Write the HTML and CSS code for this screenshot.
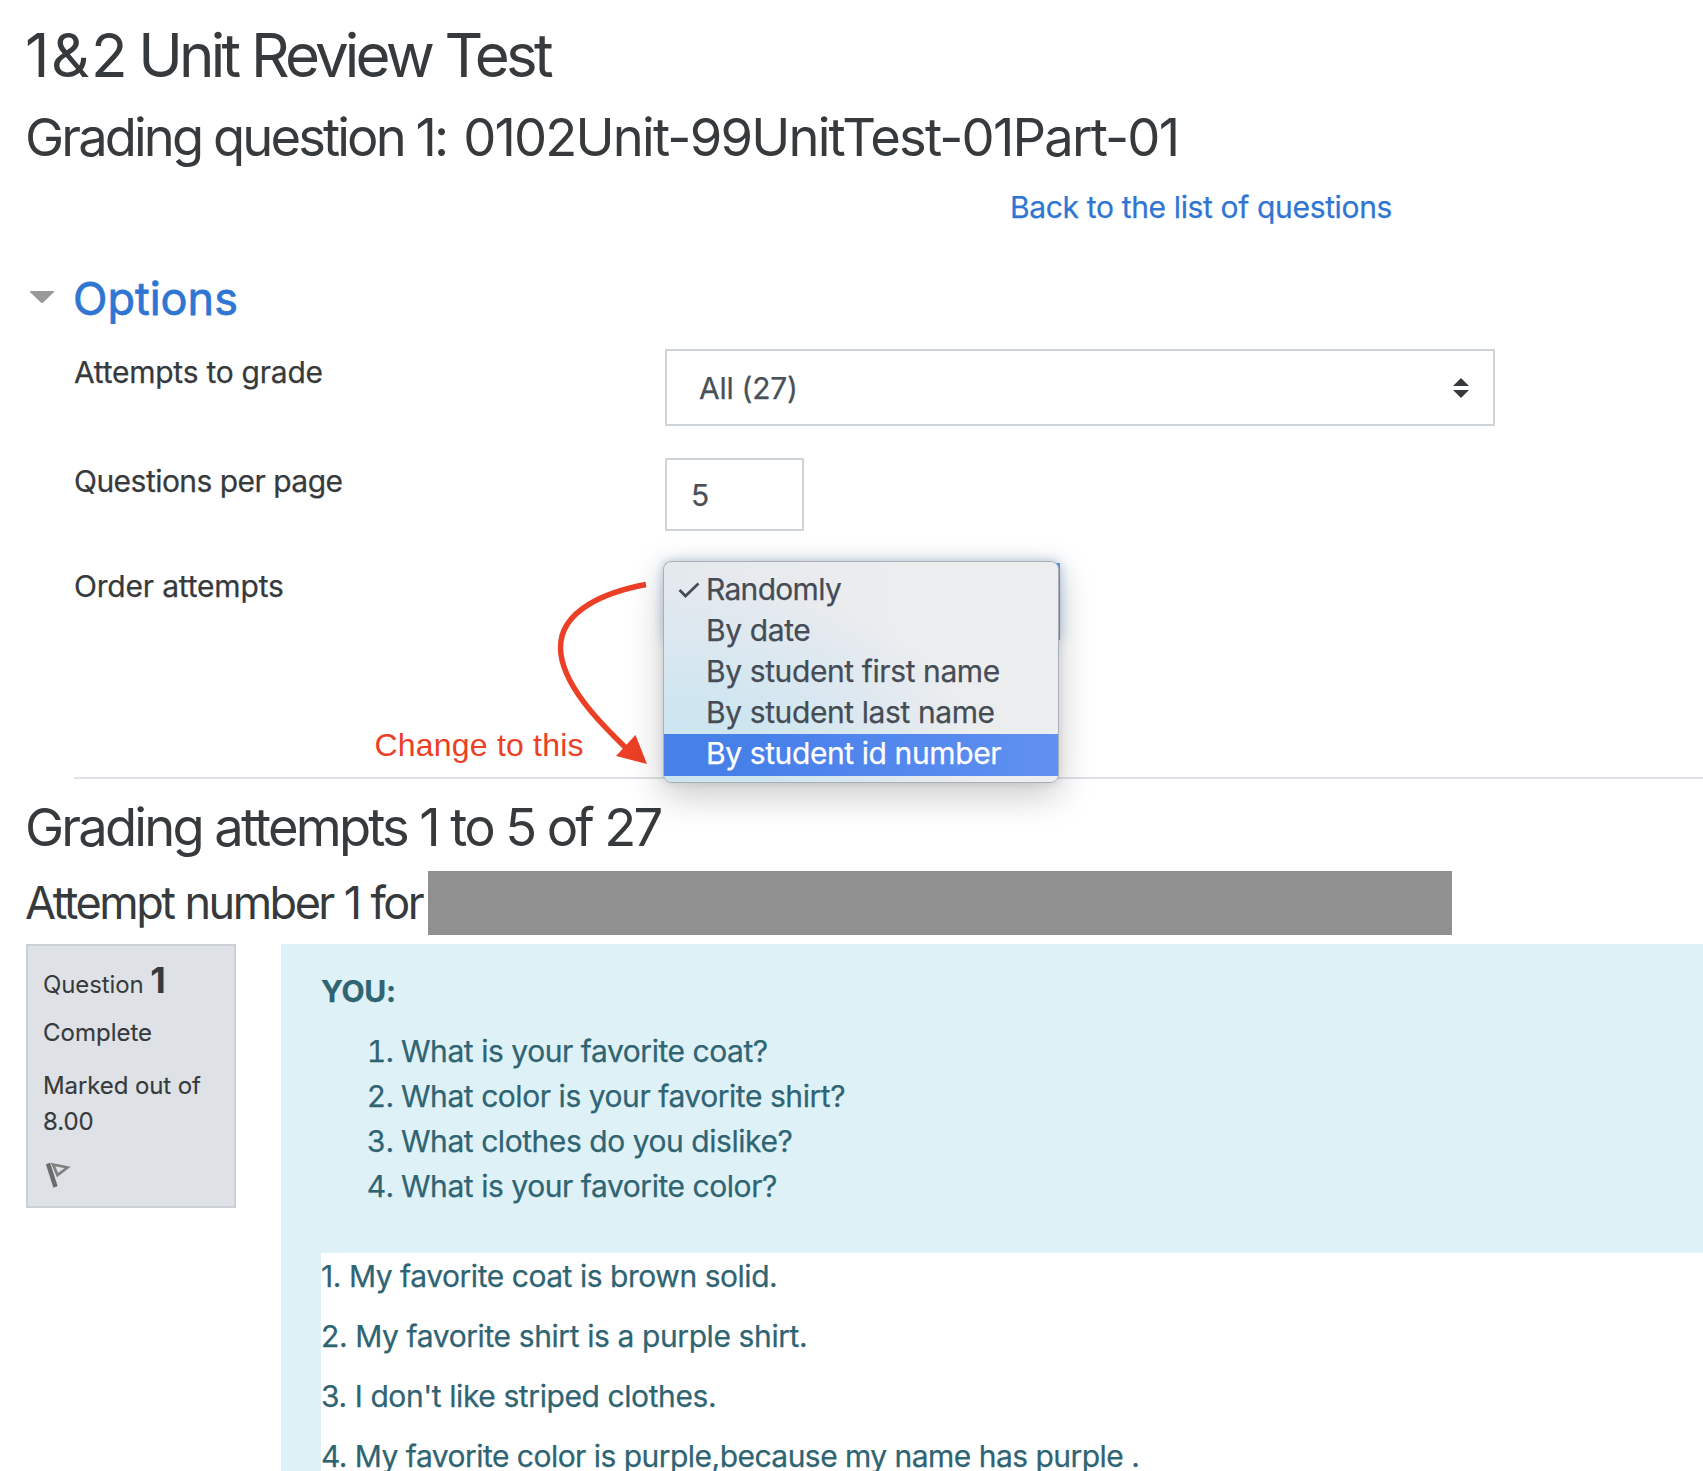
FILE: index.html
```html
<!DOCTYPE html>
<html lang="en">
<head>
<meta charset="utf-8">
<title>1&amp;2 Unit Review Test</title>
<link rel="stylesheet" href="styles.css">
</head>
<body>
<main class="page">
  <h2 class="title"><span class="units">1&amp;2</span> Unit Review Test</h2>
  <h3 class="heading heading-question">Grading question 1: <span class="code">0102Unit-99UnitTest-01Part-01</span></h3>
  <div class="back"><a class="back-link">Back to the list of questions</a></div>

  <section class="options">
    <h3 class="options-title">
      <svg class="caret" width="24" height="12" viewBox="0 0 24 12"><path d="M0 0h24v1L13.500 11.300q-1.500 1.200-3 0L0 1z" fill="#999"/></svg>
      <a>Options</a>
    </h3>
    <div class="fields">
      <div class="field">
        <label class="label ls-attempts">Attempts to grade</label>
        <div class="select">
          <span class="value">All (27)</span>
          <svg width="16" height="20" viewBox="0 0 16 20"><path d="M8 0l8 8H0zM0 12h16l-8 8z" fill="#373a3c"/></svg>
        </div>
      </div>
      <div class="field">
        <label class="label ls-questions">Questions per page</label>
        <div class="input">5</div>
      </div>
      <div class="field">
        <label class="label ls-order">Order attempts</label>
        <div class="select select-order">
          <ul class="menu">
            <li class="item item-checked"><svg class="check" width="22" height="16" viewBox="0 0 22 16"><path d="M1.500 8l6 6L20.500 1.500" fill="none" stroke="#464c55" stroke-width="2.700"/></svg>Randomly</li>
            <li class="item">By date</li>
            <li class="item">By student first name</li>
            <li class="item">By student last name</li>
            <li class="item item-active">By student id number</li>
          </ul>
        </div>
      </div>
    </div>
    <hr class="rule">
    <div class="note">Change to this</div>
    <svg class="arrow" width="100" height="192" viewBox="0 0 100 192">
      <path d="M94 12.500C54 20 8 38 8.500 76C9 112 48 151 76 178" fill="none" stroke="#eb4026" stroke-width="5.500"/>
      <path d="M95 192L83.500 163L64 184z" fill="#eb4026"/>
    </svg>
  </section>

  <h3 class="heading heading-attempts">Grading attempts 1 to 5 of 27</h3>
  <div class="attempt">
    <h4 class="attempt-title">Attempt number 1 for</h4>
    <div class="redacted"></div>
  </div>

  <section class="question">
    <aside class="info">
      <h3 class="number">Question <b>1</b></h3>
      <p class="state">Complete</p>
      <p class="grade">Marked out of 8.00</p>
      <svg class="flag" width="26" height="28" viewBox="0 0 26 28">
        <path d="M3 2.500L10.500 26" fill="none" stroke="#6c6c6c" stroke-width="4.500"/>
        <path d="M8 3.500L22.500 6.500L12.500 14z" fill="none" stroke="#808080" stroke-width="2.800"/>
      </svg>
    </aside>
    <div class="content">
      <p class="you">YOU:</p>
      <ol class="prompts">
        <li>What is your favorite coat?</li>
        <li>What color is your favorite shirt?</li>
        <li>What clothes do you dislike?</li>
        <li>What is your favorite color?</li>
      </ol>
      <div class="answer">
        <p>1. My favorite coat is brown solid.</p>
        <p class="ls-shirt">2. My favorite shirt is a purple shirt.</p>
        <p class="ls-striped">3. I don't like striped clothes.</p>
        <p class="ls-purple">4. My favorite color is purple,because my name has purple .</p>
      </div>
    </div>
  </section>
</main>
</body>
</html>
```
FILE: styles.css
```css
* { box-sizing: border-box; }
html, body { height: 100%; }
body {
  margin: 0;
  overflow: hidden;
  background: #fff;
  color: #373a3c;
  font: 400 30px/45px Inter, "Liberation Sans", sans-serif;
  -webkit-text-stroke: 0.25px currentColor;
}
h2, h3, h4, p, ul, ol { margin: 0; padding: 0; font-weight: 400; }
svg { display: block; flex: none; }

.page { height: 1471px; overflow: hidden; padding: 19px 0 0 26px; white-space: nowrap; }
.title, .heading, .attempt-title { -webkit-text-stroke: 0; }
.title { font-size: 60px; line-height: 72px; letter-spacing: -3.8px; word-spacing: 0.6px; margin: 0 0 15px -1px; }
.units { letter-spacing: 1.5px; margin-right: -4.6px; }
.heading { font-size: 52.5px; line-height: 63px; margin-left: -1px; }
.heading-question { letter-spacing: -2.9px; word-spacing: 0; }
.code { letter-spacing: -1.8px; margin-left: 5px; }
.heading-attempts { letter-spacing: -2.8px; word-spacing: 0.4px; margin-bottom: 12px; }
.back { margin: 16px 0 42px 984px; color: #2f76d2; letter-spacing: -0.35px; }

.options { position: relative; }
.options-title { display: flex; align-items: center; gap: 19px; padding-left: 4px; font-size: 45px; line-height: 54px; color: #2f76d2; -webkit-text-stroke: 0.8px #2f76d2; margin-bottom: 23px; }
.caret { margin-top: -4px; }
.fields { display: flex; flex-direction: column; gap: 32px; padding-left: 48px; }
.field { display: flex; align-items: flex-start; }
.label { width: 591px; padding-top: 1px; }
.ls-attempts { letter-spacing: -0.25px; }
.ls-questions { letter-spacing: -0.53px; }
.ls-order { letter-spacing: -0.19px; }
.select { width: 830px; height: 77px; border: 2px solid #ced4da; display: flex; align-items: center; justify-content: space-between; padding: 0 24px 0 32px; color: #495057; letter-spacing: -0.27px; }
.value { padding-top: 2px; }
.input { width: 139px; height: 73px; border: 2px solid #ced4da; padding: 13px 0 0 24px; color: #495057; }
.select-order { position: relative; width: 395px; border-color: #5a9fe0; padding: 0; box-shadow: 0 0 14px rgba(47, 118, 210, .3); }

.menu {
  position: absolute; left: -4px; top: -4px; z-index: 1;
  width: 395.5px; height: 222px; padding: 8px 0 6px;
  list-style: none; color: #464c55; letter-spacing: -0.4px;
  border: 1px solid #a9b0b8; border-radius: 8px;
  background: radial-gradient(ellipse 310px 190px at 2% 92%, #cbe5f1 0%, #cfe6f0 35%, #dde8f0 68%, rgba(236, 237, 239, 0) 100%), linear-gradient(90deg, #e4e9ee, #ecedef 60%);
  box-shadow: 0 12px 36px rgba(0, 0, 0, .22), 0 0 8px rgba(0, 0, 0, .1);
}
.item { position: relative; height: 41px; line-height: 39px; padding-left: 42px; }
.item-checked { letter-spacing: -0.7px; }
.item-active { height: 42px; color: #fff; background: linear-gradient(90deg, #4880ea 25%, #6090f1); }
.check { position: absolute; left: 14px; top: 12px; }
.rule { margin: 137px 0 17px 48px; border: 0; height: 2px; background: #dee2e6; }
.note { position: absolute; left: 348.5px; top: 453px; font: 32px/40px "Liberation Sans", Arial, sans-serif; letter-spacing: .2px; color: #eb4026; -webkit-text-stroke: 0; }
.arrow { position: absolute; left: 526px; top: 300px; }

.attempt { display: flex; gap: 5px; height: 64px; margin-bottom: 9px; }
.attempt-title { width: 397px; margin-left: -1px; padding-top: 5px; font-size: 45px; line-height: 54px; letter-spacing: -2.5px; word-spacing: 0.8px; }
.redacted { width: 1024px; margin-left: 1px; background: #909090; }

.question { display: flex; gap: 45px; align-items: flex-start; }
.info { width: 210px; height: 264px; padding: 16px 15px; background: #dee2e6; border: 2px solid #cad0d7; font-size: 24px; line-height: 36px; white-space: normal; -webkit-text-stroke: 0.15px currentColor; }
.number { font-size: 24px; line-height: 43px; height: 43px; letter-spacing: -.1px; white-space: nowrap; -webkit-text-stroke: 0; }
.number b { font-size: 36px; line-height: 36px; font-weight: 700; }
.state { margin: 10px 0 17px; }
.grade { letter-spacing: -.1px; }
.flag { margin: 21px 0 0 2px; filter: blur(.7px); }

.content { flex: 1; height: 540px; padding: 25px 0 0 40px; background: #def1f7; color: #2f6473; }
.you { font-weight: 700; letter-spacing: -.24px; margin-bottom: 15px; }
.prompts { padding-left: 80px; letter-spacing: -0.45px; margin-bottom: 44px; }
.answer { height: 260px; padding-top: 1px; background: #fff; display: flex; flex-direction: column; gap: 15px; letter-spacing: -0.46px; }
.ls-shirt { letter-spacing: -0.4px; }
.ls-striped { letter-spacing: -0.41px; }
.ls-purple { letter-spacing: -0.53px; }
```
